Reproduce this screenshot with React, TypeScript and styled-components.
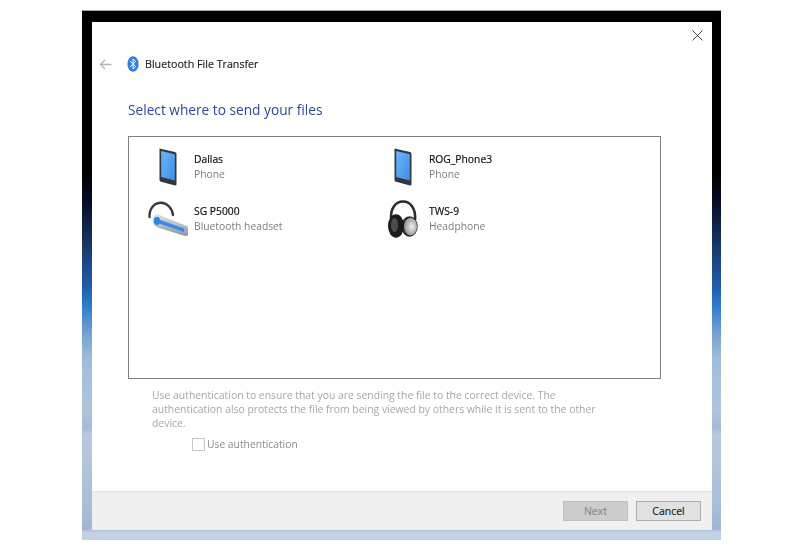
import React from "react";
import styled, { createGlobalStyle } from "styled-components";

const Global = createGlobalStyle`
  html, body { margin: 0; padding: 0; background: #fff; height: 555px; overflow: hidden; }
  body { font-family: "Open Sans", "Noto Sans", "Liberation Sans", sans-serif; }
`;

const Backdrop = styled.div`
  width: 639px;
  height: 530px;
  margin: 10px 0 0 82px;
  box-sizing: border-box;
  padding: 11px 9px 10px 10px;
  border-top: 1px solid #a8a8a8;
  background: linear-gradient(
    to bottom,
    #000 0,
    #000 160px,
    #050a20 188px,
    #1a3a6e 238px,
    #2060b0 278px,
    #2e7cca 295px,
    #6fa0d0 321px,
    #a0bcdc 348px,
    #b0c3dc 400px,
    #a6bad6 416px,
    #b8c8de 424px,
    #a9bcd6 500px,
    #9fb5d3 518px,
    #c3d1e4 521px,
    #c3d1e4 530px
  );
`;

const Dialog = styled.div`
  height: 100%;
  background: #fff;
  display: flex;
  flex-direction: column;
`;

const CloseRow = styled.div`
  height: 28px;
  display: flex;
  justify-content: flex-end;
  align-items: flex-start;
  padding: 8px 9px 0 0;
  box-sizing: border-box;
`;

const NavRow = styled.div`
  display: flex;
  align-items: center;
  height: 28px;
  padding-left: 7px;
`;

const BackIcon = styled.svg`
  width: 13px;
  height: 11px;
  margin-right: 15px;
`;

const BluetoothIcon = styled.svg`
  width: 12px;
  height: 16px;
  margin-right: 6px;
`;

const NavTitle = styled.span`
  font-size: 10.7px;
  color: #1c1c1c;
  -webkit-text-stroke: 0.15px #1c1c1c;
  filter: blur(0.25px);
`;

const Body = styled.div`
  flex: 1;
  padding: 0 51px 0 36px;
  display: flex;
  flex-direction: column;
`;

const Heading = styled.h1`
  margin: 22px 0 0;
  font-size: 13.7px;
  line-height: 20px;
  font-weight: 400;
  color: #2f459f;
  filter: blur(0.25px);
`;

const DeviceList = styled.div`
  margin-top: 16px;
  height: 243px;
  box-sizing: border-box;
  border: 1px solid #7f7f7f;
  display: grid;
  grid-template-columns: 235px 235px;
  grid-auto-rows: 52px;
  align-content: start;
  padding-top: 8px;
`;

const Device = styled.div`
  display: flex;
  align-items: center;
  height: 44px;
`;

const IconSlot = styled.div`
  width: 65px;
  height: 44px;
  flex: none;
  box-sizing: border-box;
  padding-left: 12px;
  display: flex;
  align-items: center;
  justify-content: center;
  filter: blur(0.35px);
`;

const DeviceText = styled.div`
  display: flex;
  flex-direction: column;
  filter: blur(0.25px);
`;

const DeviceName = styled.span`
  font-size: 10.3px;
  line-height: 15px;
  color: #111;
  -webkit-text-stroke: 0.2px #111;
`;

const DeviceKind = styled.span`
  font-size: 10.3px;
  line-height: 15px;
  color: #7c7c7c;
`;

const Help = styled.p`
  margin: 9px 0 0 24px;
  width: 455px;
  font-size: 10.4px;
  line-height: 14px;
  color: #a6a6a6;
  filter: blur(0.25px);
`;

const CheckRow = styled.label`
  display: flex;
  align-items: center;
  margin: 7px 0 0 64px;
  font-size: 10.3px;
  line-height: 14px;
  color: #8a8a8a;
  filter: blur(0.2px);
`;

const Box = styled.span`
  width: 11px;
  height: 11px;
  border: 1px solid #c6c6c6;
  margin-right: 2px;
`;

const Footer = styled.div`
  height: 39px;
  background: #f0f0f0;
  border-top: 1px solid #e4e4e4;
  display: flex;
  justify-content: flex-end;
  align-items: center;
  gap: 8px;
  padding-right: 11px;
  box-sizing: border-box;
`;

const Button = styled.button<{ $disabled?: boolean }>`
  width: 65px;
  height: 20px;
  padding: 0 0 1px;
  box-sizing: border-box;
  font: 10.5px "Open Sans", sans-serif;
  background: ${(p) => (p.$disabled ? "#cccccc" : "#e1e1e1")};
  border: 1px solid ${(p) => (p.$disabled ? "#bfbfbf" : "#adadad")};
  color: ${(p) => (p.$disabled ? "#8a8a8a" : "#1a1a1a")};
  -webkit-text-stroke: 0.15px ${(p) => (p.$disabled ? "#8a8a8a" : "#1a1a1a")};
`;

const PhoneIcon = () => (
  <svg width="18" height="38" viewBox="0 0 18 38">
    <defs>
      <linearGradient id="ph" x1="0" y1="0" x2="1" y2="1">
        <stop offset="0" stopColor="#6ab6f7" />
        <stop offset="1" stopColor="#3f8eea" />
      </linearGradient>
    </defs>
    <path d="M.5.5 L16 4 Q17.5 4.5 17.5 6 V36 Q17.5 37.8 16 37.5 L2 33.8 Q.5 33.4 .5 32 Z" fill="#33373b" />
    <path d="M2.2 3 L15.8 6.2 V32.5 L2.2 29 Z" fill="url(#ph)" />
  </svg>
);

const HeadsetIcon = () => (
  <svg width="42" height="38" viewBox="0 0 42 38">
    <defs>
      <linearGradient id="hs" x1="0" y1="0" x2="0" y2="1">
        <stop offset="0" stopColor="#dfe3e6" />
        <stop offset="1" stopColor="#8f969e" />
      </linearGradient>
    </defs>
    <path d="M2.5 17 C2 8 8 2.8 14 2.8 C20 2.8 25 8 26 15" fill="none" stroke="#3a3a3a" strokeWidth="2.4" strokeLinecap="round" />
    <path d="M6 20 Q6 14 11 14 L17 17 L41 26.5 L41 35.5 L38 36 L12 28 Q6 26 6 20 Z" fill="url(#hs)" />
    <ellipse cx="10" cy="21" rx="3.2" ry="4" fill="#2f86e2" />
    <path d="M12 19.5 L37 28.5 L37 32 L12 23.5 Z" fill="#3a8be6" />
  </svg>
);

const HeadphoneIcon = () => (
  <svg width="30" height="38" viewBox="0 0 30 38">
    <defs>
      <radialGradient id="cup" cx="0.6" cy="0.5" r="0.6">
        <stop offset="0" stopColor="#f0f0f0" />
        <stop offset="1" stopColor="#8e8e8e" />
      </radialGradient>
    </defs>
    <path d="M3.2 20 C2 8 8 1.5 15 1.5 C22 1.5 28 8 27 20" fill="none" stroke="#2c2c2c" strokeWidth="2.6" />
    <ellipse cx="21.5" cy="26.5" rx="8.2" ry="10.3" fill="#2b2b2b" />
    <ellipse cx="8" cy="26" rx="8" ry="11.7" fill="#1c1c1c" />
    <ellipse cx="6.5" cy="25" rx="3.6" ry="7" fill="#4c4c4c" />
    <ellipse cx="22.5" cy="26.5" rx="6.5" ry="8.8" fill="url(#cup)" />
  </svg>
);

const devices = [
  { name: "Dallas", kind: "Phone", icon: <PhoneIcon /> },
  { name: "ROG_Phone3", kind: "Phone", icon: <PhoneIcon /> },
  { name: "SG P5000", kind: "Bluetooth headset", icon: <HeadsetIcon /> },
  { name: "TWS-9", kind: "Headphone", icon: <HeadphoneIcon /> },
];

export default function App() {
  return (
    <>
      <Global />
      <Backdrop>
        <Dialog>
          <CloseRow>
            <svg width="11" height="11" viewBox="0 0 11 11">
              <path d="M.5.5l10 10M10.5.5l-10 10" stroke="#444" strokeWidth="1" fill="none" />
            </svg>
          </CloseRow>
          <NavRow>
            <BackIcon viewBox="0 0 13 11">
              <path d="M12.5 5.5H1.5M6 1L1.5 5.5L6 10" stroke="#b5b5b5" strokeWidth="1.4" fill="none" />
            </BackIcon>
            <BluetoothIcon viewBox="0 0 12 16">
              <ellipse cx="6" cy="8" rx="5.6" ry="7.8" fill="#2f7fe8" />
              <path d="M3.2 5.2L8.6 10.4L6 13V3L8.6 5.6L3.2 10.8" stroke="#fff" strokeWidth="1" fill="none" />
            </BluetoothIcon>
            <NavTitle>Bluetooth File Transfer</NavTitle>
          </NavRow>
          <Body>
            <Heading>Select where to send your files</Heading>
            <DeviceList>
              {devices.map((d) => (
                <Device key={d.name}>
                  <IconSlot>{d.icon}</IconSlot>
                  <DeviceText>
                    <DeviceName>{d.name}</DeviceName>
                    <DeviceKind>{d.kind}</DeviceKind>
                  </DeviceText>
                </Device>
              ))}
            </DeviceList>
            <Help>
              Use authentication to ensure that you are sending the file to the correct device. The
              authentication also protects the file from being viewed by others while it is sent to the other
              device.
            </Help>
            <CheckRow>
              <Box />
              Use authentication
            </CheckRow>
          </Body>
          <Footer>
            <Button $disabled disabled>Next</Button>
            <Button>Cancel</Button>
          </Footer>
        </Dialog>
      </Backdrop>
    </>
  );
}
